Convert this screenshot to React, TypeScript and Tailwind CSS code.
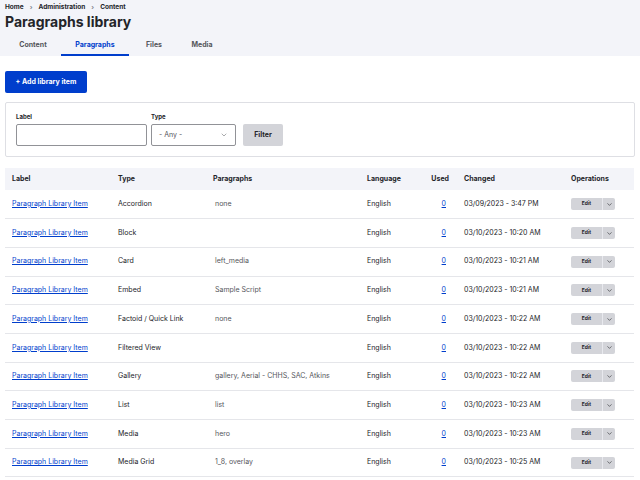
import { ChevronDown } from 'lucide-react';

const rows = [
  { type: 'Accordion', paragraphs: 'none', changed: '03/09/2023 - 3:47 PM' },
  { type: 'Block', paragraphs: '', changed: '03/10/2023 - 10:20 AM' },
  { type: 'Card', paragraphs: 'left_media', changed: '03/10/2023 - 10:21 AM' },
  { type: 'Embed', paragraphs: 'Sample Script', changed: '03/10/2023 - 10:21 AM' },
  { type: 'Factoid / Quick Link', paragraphs: 'none', changed: '03/10/2023 - 10:22 AM' },
  { type: 'Filtered View', paragraphs: '', changed: '03/10/2023 - 10:22 AM' },
  { type: 'Gallery', paragraphs: 'gallery, Aerial - CHHS, SAC, Atkins', changed: '03/10/2023 - 10:22 AM' },
  { type: 'List', paragraphs: 'list', changed: '03/10/2023 - 10:23 AM' },
  { type: 'Media', paragraphs: 'hero', changed: '03/10/2023 - 10:23 AM' },
  { type: 'Media Grid', paragraphs: '1_8, overlay', changed: '03/10/2023 - 10:25 AM' },
];

const tabs = ['Content', 'Paragraphs', 'Files', 'Media'];

export default function App() {
  return (
    <div className="w-[640px] h-[480px] overflow-hidden bg-white text-[#232429] font-['Inter',sans-serif]">
      {/* Header */}
      <div className="bg-[#f3f4f9] px-[5px] pt-[3px]">
        <div className="flex items-center gap-[6px] text-[6.5px] font-bold leading-[8px]">
          <span>Home</span>
          <span className="text-[#82828c]">›</span>
          <span>Administration</span>
          <span className="text-[#82828c]">›</span>
          <span>Content</span>
        </div>
        <h1 className="text-[14px] font-bold leading-[20px] mt-[1px]">Paragraphs library</h1>
        <div className="flex mt-[5px] text-[7px] font-bold">
          {tabs.map((t) => (
            <div
              key={t}
              className={`h-[19px] flex items-center justify-center border-b-2 ${
                t === 'Paragraphs' ? 'border-[#003ecc] text-[#003ecc] w-[68px]' : 'border-transparent text-[#55565b]'
              } ${t === 'Content' ? 'w-[56px]' : ''} ${t === 'Files' ? 'w-[50px]' : ''} ${t === 'Media' ? 'w-[46px]' : ''}`}
            >
              {t}
            </div>
          ))}
        </div>
      </div>

      <div className="px-[5px]">
        <div className="pt-[15px] flex">
          <button className="block h-[22px] w-[82px] bg-[#003ecc] text-white text-[7px] font-bold rounded-[2px]">
            + Add library item
          </button>
        </div>

        {/* Filters */}
        <div className="mt-[9px] h-[55px] border border-[#dedfe4] rounded-[2px] px-[10px] pt-[11px] flex items-end gap-[4px] pb-[10px]">
          <div className="flex flex-col">
            <label className="text-[6px] font-bold mb-[3px] leading-[8px]">Label</label>
            <div className="w-[131px] h-[22px] border border-[#919297] rounded-[2px] bg-white" />
          </div>
          <div className="flex flex-col">
            <label className="text-[6px] font-bold mb-[3px] leading-[8px]">Type</label>
            <div className="w-[85px] h-[22px] border border-[#919297] rounded-[2px] bg-white flex items-center justify-between px-[7px] text-[7px] text-[#55565b]">
              <span>- Any -</span>
              <ChevronDown size={8} strokeWidth={1.5} />
            </div>
          </div>
          <button className="ml-[3px] w-[40px] h-[22px] bg-[#d3d4d9] text-[#232429] text-[7px] font-bold rounded-[2px]">
            Filter
          </button>
        </div>

        {/* Table */}
        <table className="mt-[11px] w-[629px] text-[7px] border-collapse table-fixed">
          <colgroup>
            <col className="w-[106px]" />
            <col className="w-[95px]" />
            <col className="w-[154px]" />
            <col className="w-[57px]" />
            <col className="w-[38px]" />
            <col className="w-[108px]" />
            <col className="w-[71px]" />
          </colgroup>
          <thead>
            <tr className="bg-[#f3f4f9] h-[22px] font-bold text-left">
              <th className="pl-[7px] font-bold">Label</th>
              <th className="pl-[7px] font-bold">Type</th>
              <th className="pl-[7px] font-bold">Paragraphs</th>
              <th className="pl-[7px] font-bold">Language</th>
              <th className="font-bold text-right pr-[6px]">Used</th>
              <th className="pl-[9px] font-bold">Changed</th>
              <th className="pl-[8px] font-bold">Operations</th>
            </tr>
          </thead>
          <tbody>
            {rows.map((r, i) => (
              <tr key={i} className="h-[28.7px] border-b border-[#e5e6ea]">
                <td className="pl-[7px]">
                  <a className="text-[#003ecc] underline">Paragraph Library Item</a>
                </td>
                <td className="pl-[7px]">{r.type}</td>
                <td className="pl-[9px] text-[#55565b]">{r.paragraphs}</td>
                <td className="pl-[7px]">English</td>
                <td className="text-right pr-[9px]">
                  <a className="text-[#003ecc] underline">0</a>
                </td>
                <td className="pl-[9px]">{r.changed}</td>
                <td className="pl-[8px]">
                  <div className="flex w-[44px] h-[12px] rounded-[2px] overflow-hidden bg-[#d3d4d9]">
                    <span className="w-[32px] flex items-center justify-center text-[5px] font-bold border-r border-[#e8e9ee]">Edit</span>
                    <span className="flex-1 flex items-center justify-center">
                      <ChevronDown size={7} strokeWidth={2} />
                    </span>
                  </div>
                </td>
              </tr>
            ))}
          </tbody>
        </table>
      </div>
    </div>
  );
}
